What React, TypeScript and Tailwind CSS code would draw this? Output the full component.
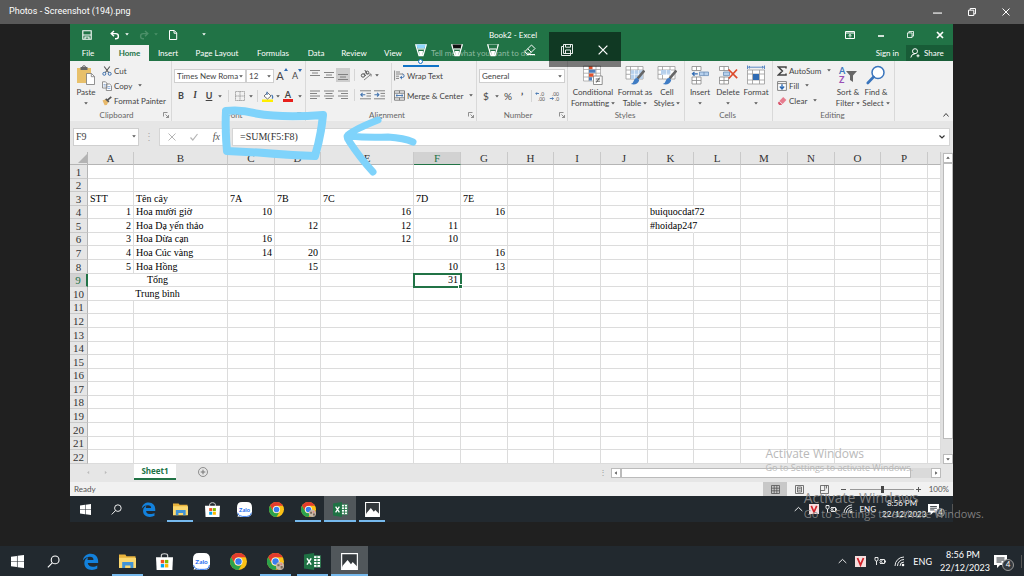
import React from 'react';

type Cell = { text: string; align?: 'left' | 'right' | 'center'; span?: number; spill?: boolean };

const COLUMNS = [
    { name: 'A', width: 'w-[46px]' },
    { name: 'B', width: 'w-[94px]' },
    { name: 'C', width: 'w-[47px]' },
    { name: 'D', width: 'w-[46px]' },
    { name: 'E', width: 'w-[93px]' },
    { name: 'F', width: 'w-[47px]' },
    { name: 'G', width: 'w-[47px]' },
    { name: 'H', width: 'w-[46px]' },
    { name: 'I', width: 'w-[47px]' },
    { name: 'J', width: 'w-[47px]' },
    { name: 'K', width: 'w-[46px]' },
    { name: 'L', width: 'w-[47px]' },
    { name: 'M', width: 'w-[47px]' },
    { name: 'N', width: 'w-[47px]' },
    { name: 'O', width: 'w-[46px]' },
    { name: 'P', width: 'w-[47px]' },
    { name: '', width: '' },
];

const CELLS: Record<string, Cell> = {
    A3: { text: 'STT' },
    B3: { text: 'Tên cây' },
    C3: { text: '7A' },
    D3: { text: '7B' },
    E3: { text: '7C' },
    F3: { text: '7D' },
    G3: { text: '7E' },
    A4: { text: '1', align: 'right' },
    B4: { text: 'Hoa mười giờ' },
    C4: { text: '10', align: 'right' },
    E4: { text: '16', align: 'right' },
    G4: { text: '16', align: 'right' },
    K4: { text: 'buiquocdat72', spill: true },
    A5: { text: '2', align: 'right' },
    B5: { text: 'Hoa Dạ yến thảo' },
    D5: { text: '12', align: 'right' },
    E5: { text: '12', align: 'right' },
    F5: { text: '11', align: 'right' },
    K5: { text: '#hoidap247', spill: true },
    A6: { text: '3', align: 'right' },
    B6: { text: 'Hoa Dừa cạn' },
    C6: { text: '16', align: 'right' },
    E6: { text: '12', align: 'right' },
    F6: { text: '10', align: 'right' },
    A7: { text: '4', align: 'right' },
    B7: { text: 'Hoa Cúc vàng' },
    C7: { text: '14', align: 'right' },
    D7: { text: '20', align: 'right' },
    G7: { text: '16', align: 'right' },
    A8: { text: '5', align: 'right' },
    B8: { text: 'Hoa Hồng' },
    D8: { text: '15', align: 'right' },
    F8: { text: '10', align: 'right' },
    G8: { text: '13', align: 'right' },
    A9: { text: 'Tổng', align: 'center', span: 2 },
    F9: { text: '31', align: 'right' },
    A10: { text: 'Trung bình', align: 'center', span: 2 },
};

const ROWS = Array.from({ length: 22 }, (_, i) => i + 1);

const ALIGN = { left: 'text-left', right: 'text-right', center: 'text-center' };

/* ---------- icons ---------- */

interface IconProps {
    box: string;
    className?: string;
    children: React.ReactNode;
}

const Icon = ({ box, className = 'size-3', children }: IconProps) => (
    <svg viewBox={box} className={`shrink-0 ${className}`} fill="none" stroke="currentColor" aria-hidden="true">{children}</svg>
);

const Caret = ({ className = 'text-[#555]' }: { className?: string }) => (
    <Icon box="0 0 4 3" className={`h-[3px] w-1 ${className}`}><path d="M.2.2h3.600L2 2.400z" fill="currentColor" stroke="none" /></Icon>
);

const Launcher = () => (
    <Icon box="0 0 6 6" className="size-[6px] text-[#777]"><path d="M.5 4.5v-4h4M2.5 2.5l3 3M5.5 3v2.5H3" strokeWidth=".8" /></Icon>
);

const SaveIcon = () => (
    <Icon box="0 0 10 10" className="size-[10px]"><path d="M.8.8h8.4v8.4H.8zM.8 5h8.4M3 9V7h4v2" strokeWidth="1.1" /></Icon>
);

const UndoIcon = ({ flip = false }: { flip?: boolean }) => (
    <Icon box="0 0 10 10" className={flip ? 'size-[10px] -scale-x-100 text-[#4c9069]' : 'size-[10px]'}>
        <path d="M4 1 1.2 3.6 4 6.3M1.4 3.6h4.4a2.6 2.6 0 0 1 0 5.2H5" strokeWidth="1.4" />
    </Icon>
);

const PageIcon = () => (
    <Icon box="0 0 10 10" className="size-[10px]"><path d="M1.5.5h4.8l2.4 2.4v6.6H1.5zM6 .5v2.7h2.7" /></Icon>
);

const RestoreIcon = ({ className = 'size-2' }: { className?: string }) => (
    <Icon box="0 0 8 8" className={className}><path d="M.5 2.2h5.3v5.3H.5zM2.2 2V.5h5.3v5.3H6" /></Icon>
);

const CloseIcon = ({ className = 'size-2' }: { className?: string }) => (
    <Icon box="0 0 8 8" className={className}><path d="m.5.5 7 7m0-7-7 7" /></Icon>
);

const MinusIcon = ({ className = 'size-2' }: { className?: string }) => (
    <Icon box="0 0 8 8" className={className}><path d="M0 4.5h8" /></Icon>
);

const PasteIcon = () => (
    <Icon box="0 0 20 20" className="size-5">
        <path d="M1 3h14v15H1z" fill="#e8c06a" stroke="none" />
        <path d="M4.5 2h7v3h-7z" fill="#666" stroke="none" />
        <path d="M6.5 2.2a1.5 1.5 0 0 1 3 0" stroke="#666" />
        <path d="M10.5 8.5h5l3 3v8h-8z" fill="#fff" stroke="#777" strokeWidth=".8" />
        <path d="M15.3 8.5v3.2h3.2" stroke="#777" strokeWidth=".8" />
    </Icon>
);

const CutIcon = () => (
    <Icon box="0 0 10 10" className="size-[10px]">
        <path d="M2.2.5 6.8 6.8M7.8.5 3.2 6.8" stroke="#555" strokeWidth="1.1" />
        <circle cx="2.3" cy="7.8" r="1.5" stroke="#4274b0" />
        <circle cx="7.7" cy="7.8" r="1.5" stroke="#4274b0" />
    </Icon>
);

const CopyIcon = () => (
    <Icon box="0 0 10 10" className="size-[10px]">
        <path d="M.5.8h3l1.4 1.4V7H.5zM4.3 3h3.4l1.8 1.8v4.7H4.3z" fill="#fff" stroke="#777" strokeWidth=".8" />
        <path d="M1.5 3.4h2M1.5 5h2M5.4 5.6h3M5.4 7.4h3" stroke="#5b8ac6" strokeWidth=".7" />
    </Icon>
);

const PainterIcon = () => (
    <Icon box="0 0 10 10" className="size-[10px]">
        <path d="m.5 4.5 3-1.3 2.8 2.9L4.8 9 2.6 9.3z" fill="#e8b96a" stroke="none" />
        <path d="m3.7 2.9 3.2 3M5.5 4.2l3.8-3.4" stroke="#555" strokeWidth="1.6" />
    </Icon>
);

const BordersIcon = () => (
    <Icon box="0 0 10 10" className="size-[10px] text-[#888]"><path d="M.5.5h9v9h-9zM5 .5v9M.5 5h9" strokeDasharray="1.2 .8" strokeWidth=".9" /></Icon>
);

const FillIcon = () => (
    <Icon box="0 0 12 11" className="h-[11px] w-3">
        <path d="M0 8.5h11V11H0z" fill="#ffee00" stroke="none" />
        <path d="M5.5 1.5 9 5 5.5 8 2 5z" fill="#fff" stroke="#666" strokeWidth=".9" />
        <path d="M5 4V.8M9.5 4c1.5 1 1.5 2.6.6 3.6" stroke="#4274b0" strokeWidth="1.2" />
    </Icon>
);

const GrowFontIcon = ({ shrink = false }: { shrink?: boolean }) => (
    <span className="relative pr-1">
        <span className={shrink ? 'text-[9px]' : 'text-[11px]'}>A</span>
        <Icon box="0 0 4 3" className="absolute top-0 right-0 h-[3px] w-1 text-[#2f6bb3]">
            <path d={shrink ? 'M0 0h4L2 3z' : 'M0 3h4L2 0z'} fill="currentColor" stroke="none" />
        </Icon>
    </span>
);

const ALIGN_LINES = {
    top: 'M0 .5h10M2 3h6M0 5.5h10',
    middle: 'M0 2.5h10M2 5h6M0 7.5h10',
    bottom: 'M0 4.5h10M2 7h6M0 9.5h10',
    left: 'M0 1h10M0 3.5h7M0 6h10M0 8.5h7',
    center: 'M0 1h10M1.5 3.5h7M0 6h10M1.5 8.5h7',
    right: 'M0 1h10M3 3.5h7M0 6h10M3 8.5h7',
};

const AlignIcon = ({ kind }: { kind: keyof typeof ALIGN_LINES }) => (
    <Icon box="0 0 10 10" className="size-[10px] text-[#777]"><path d={ALIGN_LINES[kind]} strokeWidth=".9" /></Icon>
);

const IndentIcon = ({ out = false }: { out?: boolean }) => (
    <Icon box="0 0 12 10" className="h-[10px] w-3">
        <path d="M0 .8h11M6.5 3.4H11M6.5 6H11M0 8.8h11" stroke="#777" strokeWidth=".9" />
        <path d={out ? 'M5.3 4.7H.8M2.6 2.9.8 4.7l1.8 1.8' : 'M.4 4.7h4.5M3.1 2.9l1.8 1.8-1.8 1.8'} stroke="#4274b0" strokeWidth="1.1" />
    </Icon>
);

const OrientationIcon = () => (
    <Icon box="0 0 12 12" className="size-3">
        <circle cx="3" cy="6.5" r="1.7" stroke="#555" />
        <path d="M4 4.2 5.6 7M4.800 1l2.600 4.200" stroke="#555" />
        <circle cx="7.3" cy="3.6" r="1.5" stroke="#555" />
        <path d="m4 11 6.800-5.500M8.600 5h2.500v2.500" stroke="#777" strokeWidth=".9" />
    </Icon>
);

const WrapIcon = () => (
    <Icon box="0 0 11 11" className="size-[11px]">
        <path d="M.6.5v10M2 2h4M2 4h7M2 6.2h3M2 8.4h3" stroke="#777" strokeWidth=".9" />
        <path d="M6.3 7.5h2.2q1.6 0 1.6-1.7T8.5 4M8 5.8 6.3 7.5 8 9.2" stroke="#4274b0" strokeWidth="1" />
    </Icon>
);

const MergeIcon = () => (
    <Icon box="0 0 11 11" className="size-[11px]">
        <path d="M.5.8h10v9.4H.5zM.5 3.2h10M.5 7.8h10M5.5.8v2.4M5.5 7.8v2.4" stroke="#777" strokeWidth=".9" />
        <path d="M2 5.5h7M3.4 4.3 2 5.5l1.4 1.2M7.6 4.3 9 5.5 7.6 6.7" stroke="#4274b0" strokeWidth=".9" />
    </Icon>
);

const DecimalIcon = ({ more = false }: { more?: boolean }) => (
    <Icon box="0 0 12 12" className="size-3">
        <text x={more ? 5 : 3} y="5.5" fontSize="5" fill="#555" stroke="none">{more ? '.0' : '.00'}</text>
        <text x={more ? 3 : 6} y="10.5" fontSize="5" fill="#555" stroke="none">{more ? '.00' : '.0'}</text>
        <path d={more ? 'M4 3.500H.8M2 2.300.8 3.500 2 4.700' : 'M.8 8.500h3.600M3.200 7.300l1.200 1.200-1.200 1.200'} stroke="#4274b0" strokeWidth=".9" />
    </Icon>
);

const ConditionalIcon = () => (
    <Icon box="0 0 20 20" className="size-5">
        <path d="M.5 1h17v15H.5zM.5 4.5h17M.5 8.2h17M.5 12h17M5.8 1v15M13 1v15" fill="#fff" stroke="#999" strokeWidth=".7" />
        <path d="M6 1.2h3.5v3H6zM6 8.5h4.5v3.2H6z" fill="#e0532f" stroke="none" />
        <path d="M6 4.8h6.5v3H6zM6 12.3h3v3.2H6z" fill="#4b7dbd" stroke="none" />
        <path d="M10.5 11h8.7v8.5h-8.7z" fill="#fff" stroke="#777" strokeWidth=".8" />
        <path d="M12.7 14h4.4M12.7 16.2h4.4M16.6 12.6l-3.3 5" stroke="#444" strokeWidth=".8" />
    </Icon>
);

const TableFormatIcon = ({ cell = false }: { cell?: boolean }) => (
    <Icon box="0 0 20 20" className="size-5">
        <path d="M1 1.5h17v12.5H1zM1 5h17M1 9.3h17M5.5 1.5V14M13 1.5V14" fill="#fff" stroke="#999" strokeWidth=".8" />
        <path d={cell ? 'M4 5h10v5H4z' : 'M5.8 5.3h12v8.5h-12z'} fill="#b6d0ec" stroke="none" />
        <path d="M5.5 9.3h12M9.5 5v8.7M13.5 5v8.7" stroke="#fff" strokeWidth=".6" />
        <path d="m19.3 5.5-6.8 8.2" stroke="#666" strokeWidth="2.6" />
        <path d="M12.8 13q-3.3-.6-4 2.7-.7 2.6-3 3.3 6.3 1.6 8.4-3.6z" fill="#3f7cc4" stroke="none" />
    </Icon>
);

const InsertCellsIcon = () => (
    <Icon box="0 0 20 20" className="size-5">
        <path d="M2 1.5h9v4H2zM6.5 1.5v4M2 12h9v7H2zM6.5 12v7M2 15.5h9" fill="#fff" stroke="#888" strokeWidth=".8" />
        <path d="M9.5 7h9v3.6h-9zM14 7v3.6" fill="#b6d0ec" stroke="#6a8eb8" strokeWidth=".8" />
        <path d="M7.8 8.8H2.5M4.5 6.9 2.5 8.8l2 1.9" stroke="#2f6bb3" strokeWidth="1.3" />
    </Icon>
);

const DeleteCellsIcon = () => (
    <Icon box="0 0 20 20" className="size-5">
        <path d="M1.5 1.5h9v4h-9zM6 1.5v4M1.5 12h9v7h-9zM6 12v7M1.5 15.5h9" fill="#fff" stroke="#888" strokeWidth=".8" />
        <path d="M5.5 7h6v3.6h-6z" fill="#b6d0ec" stroke="#6a8eb8" strokeWidth=".8" />
        <path d="m10.5 4.5 8.7 8.6M19 4.5l-8.2 9" stroke="#dd4b2c" strokeWidth="1.7" />
    </Icon>
);

const FormatCellsIcon = () => (
    <Icon box="0 0 20 20" className="size-5">
        <path d="M1.5 5h17v14h-17zM1.5 9h17M1.5 15h17M6.5 5v14M13.5 5v14" fill="#fff" stroke="#999" strokeWidth=".8" />
        <path d="M7 9h6v6H7z" fill="#2f6bb3" stroke="none" />
        <path d="M1.5.5v3.6M18.5.5v3.6M2.5 2.2h15M4 1 2.6 2.2 4 3.4M16 1l1.4 1.2L16 3.4" stroke="#4b7dbd" strokeWidth=".9" />
    </Icon>
);

const SigmaIcon = () => (
    <Icon box="0 0 10 10" className="size-[10px] text-[#444]"><path d="M9 2.4V1H1.4l4 4-4 4H9V7.4" strokeWidth="1.5" /></Icon>
);

const FillDownIcon = () => (
    <Icon box="0 0 10 10" className="size-[10px]">
        <path d="M.6.6h8.8v8.8H.6zM.6 2.6h8.8" fill="#fff" stroke="#777" strokeWidth=".9" />
        <path d="M5 3.2v4.6M2.8 5.6 5 7.9l2.2-2.3" stroke="#2f6bb3" strokeWidth="1.4" />
    </Icon>
);

const EraserIcon = () => (
    <Icon box="0 0 10 10" className="size-[10px]">
        <path d="M6.2 1 9.4 4 5.6 8 2.4 5z" fill="#e77c8e" stroke="none" />
        <path d="M2 5.5 5 8.5 4.4 9H2.2L.8 7z" fill="#d8526a" stroke="none" />
    </Icon>
);

const SortIcon = () => (
    <Icon box="0 0 20 20" className="size-5">
        <text x="1" y="9" fontSize="9" fontWeight="700" fill="#3c78bd" stroke="none">A</text>
        <text x="1" y="18" fontSize="9" fontWeight="700" fill="#9a4fb5" stroke="none">Z</text>
        <path d="M8 6h11l-4 4.500V17l-3-2v-4.500z" fill="#666" stroke="none" />
    </Icon>
);

const FindIcon = () => (
    <Icon box="0 0 20 20" className="size-5 text-[#3a75bd]">
        <circle cx="12" cy="7.5" r="6" fill="#fff" strokeWidth="1.5" />
        <path d="m7.5 12-5.7 6" strokeWidth="2.6" strokeLinecap="round" />
    </Icon>
);

/* ---------- ribbon ---------- */

const Divider = () => <span className="block h-3 w-px bg-[#d5d5d5]" />;

interface GroupProps {
    title: string;
    width: string;
    launcher?: boolean;
    children: React.ReactNode;
}

const Group = ({ title, width, launcher = false, children }: GroupProps) => (
    <section className={`flex shrink-0 flex-col border-r border-[#d9d9d9] pt-[2px] ${width}`}>
        <div className="flex flex-1 items-start">{children}</div>
        <div className="flex h-3 items-center pr-[2px] text-[#666]">
            <h2 className="flex-1 text-center leading-3">{title}</h2>
            {launcher && <button aria-label={`${title} settings`}><Launcher /></button>}
        </div>
    </section>
);

interface BigButtonProps {
    icon: React.ReactNode;
    lines: [string, string?];
    width: string;
}

const BigButton = ({ icon, lines, width }: BigButtonProps) => (
    <button className={`flex shrink-0 flex-col items-center pt-[2px] leading-[11px] whitespace-nowrap ${width}`}>
        {icon}
        <span className="mt-[2px]">{lines[0]}</span>
        <span className="flex h-[11px] items-center gap-[2px]">{lines[1]}<Caret /></span>
    </button>
);

interface SmallButtonProps {
    icon: React.ReactNode;
    label: string;
    caret?: boolean;
}

const SmallButton = ({ icon, label, caret = false }: SmallButtonProps) => (
    <button className="flex h-[15px] items-center gap-[2px] whitespace-nowrap">
        {icon}
        <span>{label}</span>
        {caret && <span className="flex h-full items-center pl-1"><Caret /></span>}
    </button>
);

const Tool = ({ label, width = 'w-[14px]', children }: { label: string; width?: string; children: React.ReactNode }) => (
    <button aria-label={label} className={`flex h-[14px] items-center justify-center ${width}`}>{children}</button>
);

const Combo = ({ label, value, width, className = 'h-[14px]' }: { label: string; value: string; width: string; className?: string }) => (
    <div className={`relative shrink-0 ${width}`}>
        <select aria-label={label} className={`block w-full appearance-none border border-[#cfcfcf] bg-white pl-[2px] text-[#444] ${className}`}>
            <option>{value}</option>
        </select>
        <span className="pointer-events-none absolute inset-y-0 right-[3px] flex items-center"><Caret /></span>
    </div>
);

const Ribbon = () => (
    <div className="flex h-[60px] overflow-hidden bg-[#f1f1f1] text-[8px] text-[#444]">
        <Group title="Clipboard" width="w-[102px]" launcher>
            <BigButton icon={<PasteIcon />} lines={['Paste']} width="w-8" />
            <div>
                <SmallButton icon={<CutIcon />} label="Cut" />
                <SmallButton icon={<CopyIcon />} label="Copy" caret />
                <SmallButton icon={<PainterIcon />} label="Format Painter" />
            </div>
        </Group>
        <Group title="Font" width="w-[134px]" launcher>
            <div className="flex flex-col gap-[6px] pt-[6px] pl-[2px]">
                <div className="flex items-center">
                    <Combo label="Font name" value="Times New Roma" width="w-[72px]" />
                    <Combo label="Font size" value="12" width="w-7" />
                    <Tool label="Increase font size" width="w-4"><GrowFontIcon /></Tool>
                    <Tool label="Decrease font size"><GrowFontIcon shrink /></Tool>
                </div>
                <div className="flex items-center text-[9px]">
                    <Tool label="Bold"><b>B</b></Tool>
                    <Tool label="Italic"><i className="font-serif font-bold">I</i></Tool>
                    <Tool label="Underline"><span className="font-bold underline">U</span></Tool>
                    <Tool label="Underline style" width="w-2"><Caret /></Tool>
                    <span className="px-1"><Divider /></span>
                    <Tool label="Borders"><BordersIcon /></Tool>
                    <Tool label="Border style" width="w-2"><Caret /></Tool>
                    <span className="px-[2px]"><Divider /></span>
                    <Tool label="Fill color" width="w-4"><FillIcon /></Tool>
                    <Tool label="Fill color list" width="w-1"><Caret /></Tool>
                    <Tool label="Font color" width="w-4"><span className="border-b-[3px] border-[#e8201c] px-[2px] text-[9px] leading-[8px] font-bold">A</span></Tool>
                    <Tool label="Font color list" width="w-2"><Caret /></Tool>
                </div>
            </div>
        </Group>
        <Group title="Alignment" width="w-[171px]" launcher>
            <div className="flex flex-col gap-[6px] pt-[5px] pl-[2px]">
                <div className="flex items-center">
                    <Tool label="Top align"><AlignIcon kind="top" /></Tool>
                    <Tool label="Middle align"><AlignIcon kind="middle" /></Tool>
                    <span className="bg-[#cdcdcd]"><Tool label="Bottom align"><AlignIcon kind="bottom" /></Tool></span>
                    <span className="px-1"><Divider /></span>
                    <Tool label="Orientation"><OrientationIcon /></Tool>
                    <Tool label="Orientation list" width="w-2"><Caret /></Tool>
                </div>
                <div className="flex items-center">
                    <Tool label="Align left"><AlignIcon kind="left" /></Tool>
                    <Tool label="Center"><AlignIcon kind="center" /></Tool>
                    <Tool label="Align right"><AlignIcon kind="right" /></Tool>
                    <span className="px-1"><Divider /></span>
                    <Tool label="Decrease indent"><IndentIcon out /></Tool>
                    <Tool label="Increase indent"><IndentIcon /></Tool>
                </div>
            </div>
            <div className="ml-1 flex flex-col gap-[5px] border-l border-[#d9d9d9] pt-[5px] pl-[2px]">
                <SmallButton icon={<WrapIcon />} label="Wrap Text" />
                <SmallButton icon={<MergeIcon />} label="Merge & Center" caret />
            </div>
        </Group>
        <Group title="Number" width="w-[91px]" launcher>
            <div className="flex flex-1 flex-col gap-[6px] px-[2px] pt-[6px]">
                <Combo label="Number format" value="General" width="w-full" />
                <div className="flex items-center text-[10px]">
                    <Tool label="Currency">$</Tool>
                    <Tool label="Currency list" width="w-2"><Caret /></Tool>
                    <Tool label="Percent">%</Tool>
                    <Tool label="Comma"><b>’</b></Tool>
                    <span className="px-[2px]"><Divider /></span>
                    <Tool label="Increase decimal"><DecimalIcon more /></Tool>
                    <Tool label="Decrease decimal"><DecimalIcon /></Tool>
                </div>
            </div>
        </Group>
        <Group title="Styles" width="w-[117px]">
            <BigButton icon={<ConditionalIcon />} lines={['Conditional', 'Formatting']} width="w-[50px]" />
            <BigButton icon={<TableFormatIcon />} lines={['Format as', 'Table']} width="w-[34px]" />
            <BigButton icon={<TableFormatIcon cell />} lines={['Cell', 'Styles']} width="w-[30px]" />
        </Group>
        <Group title="Cells" width="w-[88px]">
            <BigButton icon={<InsertCellsIcon />} lines={['Insert']} width="w-[30px]" />
            <BigButton icon={<DeleteCellsIcon />} lines={['Delete']} width="w-[26px]" />
            <BigButton icon={<FormatCellsIcon />} lines={['Format']} width="w-[30px]" />
        </Group>
        <Group title="Editing" width="w-[122px]">
            <div className="w-[60px] pl-1">
                <SmallButton icon={<SigmaIcon />} label="AutoSum" caret />
                <SmallButton icon={<FillDownIcon />} label="Fill" caret />
                <SmallButton icon={<EraserIcon />} label="Clear" caret />
            </div>
            <BigButton icon={<SortIcon />} lines={['Sort &', 'Filter']} width="w-[30px]" />
            <BigButton icon={<FindIcon />} lines={['Find &', 'Select']} width="w-[26px]" />
        </Group>
        <div className="flex flex-1 items-end justify-end p-1">
            <button aria-label="Collapse ribbon"><Icon box="0 0 6 4" className="h-1 w-[6px]"><path d="m.5 3.5 2.5-3 2.5 3" /></Icon></button>
        </div>
    </div>
);

/* ---------- workbook ---------- */

const TABS = [
    { name: 'File', width: 'w-10 pr-1' },
    { name: 'Home', width: 'w-[39px]' },
    { name: 'Insert', width: 'w-[38px]' },
    { name: 'Page Layout', width: 'w-[60px]' },
    { name: 'Formulas', width: 'w-[52px]' },
    { name: 'Data', width: 'w-[34px]' },
    { name: 'Review', width: 'w-[42px]' },
    { name: 'View', width: 'w-9' },
];

const Header = () => (
    <header className="bg-[#217346] text-white">
        <div className="flex h-[21px] items-center">
            <div className="flex flex-1 items-center pl-3">
                <button aria-label="Save"><SaveIcon /></button>
                <button aria-label="Undo" className="ml-[18px] flex items-center gap-[5px]"><UndoIcon /><Caret className="text-white" /></button>
                <button aria-label="Redo" className="ml-[10px] flex items-center gap-[5px]"><UndoIcon flip /><Caret className="text-[#4c9069]" /></button>
                <button aria-label="New" className="ml-[10px]"><PageIcon /></button>
                <button aria-label="Customize toolbar" className="ml-6"><Caret className="text-white" /></button>
            </div>
            <h1 className="text-[8px]">Book2 - Excel</h1>
            <div className="flex flex-1 items-center justify-end gap-[22px] pr-[9px]">
                <button aria-label="Ribbon options"><Icon box="0 0 10 8" className="h-2 w-[10px]"><path d="M.5.5h9v7h-9zM.5 2h9M5 6.5V3.5M3.5 4.8 5 3.5l1.5 1.3" /></Icon></button>
                <button aria-label="Minimize workbook"><Icon box="0 0 8 8" className="size-2"><path d="M1 5h6" strokeWidth="1.6" /></Icon></button>
                <button aria-label="Restore workbook"><RestoreIcon className="size-[7px]" /></button>
                <button aria-label="Close workbook"><Icon box="0 0 8 8" className="size-2"><path d="m1 1 6 6m0-6-6 6" strokeWidth="1.7" /></Icon></button>
            </div>
        </div>
        <nav className="flex h-4 items-center text-[8px]">
            {TABS.map(tab => (
                <button
                    key={tab.name}
                    className={`h-full ${tab.width} ${tab.name === 'Home' ? 'bg-[#f1f1f1] font-bold text-[#217346]' : ''}`}
                >
                    {tab.name}
                </button>
            ))}
            <span className="flex-1 pl-5 text-[#8fbaa1]">Tell me what you want to do...</span>
            <a href="#signin" className="pr-[7px]">Sign in</a>
            <button className="flex h-full w-[47px] items-center gap-1 bg-[#185c37] pl-1">
                <Icon box="0 0 10 10" className="size-[10px]"><circle cx="5" cy="3.2" r="2.5" /><path d="M.8 9.5Q1.3 6 5 5.7M6.5 7.8h3M8 6.3v3" /></Icon>
                Share
            </button>
        </nav>
    </header>
);

const FormulaBar = () => (
    <div className="flex h-[31px] items-center bg-[#e6e6e6] px-[3px] font-['Liberation_Serif',serif] text-[10px] text-[#333]">
        <Combo label="Name box" value="F9" width="w-[66px]" className="h-[18px]" />
        <span className="w-5 text-center text-[#aaa]">⋮</span>
        <div className="flex h-[18px] w-[70px] items-center justify-between border border-[#d5d5d5] bg-white px-2 text-[#b5b5b5]">
            <button aria-label="Cancel"><CloseIcon /></button>
            <button aria-label="Enter"><Icon box="0 0 8 8" className="size-2"><path d="m.5 4.5 2.3 2.5 4.7-6" strokeWidth="1.2" /></Icon></button>
            <button aria-label="Insert function" className="text-[#555] italic">fx</button>
        </div>
        <div className="ml-[3px] flex h-[18px] flex-1 items-center border border-[#d5d5d5] bg-white pr-1">
            <input aria-label="Formula" defaultValue="=SUM(F5:F8)" className="h-full min-w-0 flex-1 pl-[7px]" />
            <Icon box="0 0 6 4" className="h-1 w-[6px]"><path d="m.5.5 2.5 2.5L5.5.5" strokeWidth="1.2" /></Icon>
        </div>
    </div>
);

const Row = ({ row }: { row: number }) => {
    const cells: React.ReactNode[] = [];
    for (let i = 0; i < COLUMNS.length; i++) {
        const id = COLUMNS[i].name + row;
        const cell = CELLS[id];
        const selected = id === 'F9';
        cells.push(
            <td
                key={i}
                colSpan={cell?.span}
                className={`border-r border-b border-b-[#dcdcdc] px-[2px] py-0 align-bottom whitespace-nowrap ${cell?.spill ? 'border-r-transparent' : 'border-r-[#dcdcdc]'} ${ALIGN[cell?.align ?? 'left']} ${selected ? 'relative outline-2 -outline-offset-1 outline-[#217346]' : ''}`}
            >
                {cell?.text}
                {selected && <span className="absolute -right-[2px] -bottom-[2px] size-[3px] bg-[#217346] ring-1 ring-white" />}
            </td>
        );
        if (cell?.span) i += cell.span - 1;
    }
    return (
        <tr>
            <th className={`border-b border-b-[#c9c9c9] p-0 align-bottom text-[11px] font-normal ${row === 9 ? 'border-r-2 border-r-[#217346] bg-[#d2d2d2] text-[#217346]' : 'border-r border-r-[#b5b5b5] bg-[#e6e6e6] text-[#333]'}`}>{row}</th>
            {cells}
        </tr>
    );
};

const Sheet = () => (
    <div className="flex bg-[#e6e6e6]">
        <div className="min-w-0 flex-1">
            <table className="h-[312px] w-full table-fixed border-separate border-spacing-0 bg-white font-['Liberation_Serif',serif] text-[10px] leading-3 text-black">
                <colgroup>
                    <col className="w-[18px]" />
                    {COLUMNS.map((column, i) => <col key={i} className={column.width} />)}
                </colgroup>
                <thead>
                    <tr className="h-[13px]">
                        <th className="border-r border-b border-[#b5b5b5] bg-[#e6e6e6] p-0">
                            <Icon box="0 0 8 8" className="ml-auto size-[9px]"><path d="M8 0v8H0z" fill="#b3b3b3" stroke="none" /></Icon>
                        </th>
                        {COLUMNS.map((column, i) => (
                            <th
                                key={i}
                                className={`border-r border-b border-r-[#c9c9c9] p-0 text-[11px] font-normal ${column.name === 'F' ? 'border-b-[#217346] bg-[#d2d2d2] text-[#217346]' : 'border-b-[#b5b5b5] bg-[#e6e6e6] text-[#333]'}`}
                            >
                                {column.name}
                            </th>
                        ))}
                    </tr>
                </thead>
                <tbody>{ROWS.map(row => <Row key={row} row={row} />)}</tbody>
            </table>
        </div>
        <div className="flex w-3 flex-col items-end bg-[#e1e1e1] pt-px text-[#666]">
            <button aria-label="Scroll up" className="flex h-[10px] w-[10px] rotate-180 items-center justify-center border border-[#bbb] bg-white"><Caret /></button>
            <span className="w-[10px] flex-1 border border-[#bbb] bg-white" />
            <span className="h-[15px]" />
            <button aria-label="Scroll down" className="flex h-[10px] w-[10px] items-center justify-center border border-[#bbb] bg-white"><Caret /></button>
        </div>
    </div>
);

const SheetTabs = () => (
    <div className="flex h-[18px] items-start bg-[#e6e6e6]">
        <div className="flex h-4 w-16 items-center gap-[14px] pl-4">
            <Caret className="rotate-90 text-[#bbb]" />
            <Caret className="-rotate-90 text-[#bbb]" />
        </div>
        <button className="h-4 w-[42px] border-b-2 border-[#217346] bg-white font-['Open_Sans',sans-serif] text-[8px] font-bold text-[#217346]">Sheet1</button>
        <button aria-label="New sheet" className="ml-[22px] flex h-4 items-center">
            <Icon box="0 0 10 10" className="size-[10px] text-[#777]"><circle cx="5" cy="5" r="4.5" strokeWidth=".8" /><path d="M5 2.7v4.6M2.7 5h4.6" /></Icon>
        </button>
        <span className="ml-auto flex h-4 w-3 items-center text-[8px] text-[#999]">⋮</span>
        <div className="mt-1 mr-3 flex h-[10px] w-[330px]">
            <button aria-label="Scroll left" className="flex w-[10px] rotate-90 items-center justify-center border border-[#bbb] bg-white"><Caret /></button>
            <span className="flex-1 border border-[#bbb] bg-white" />
            <span className="w-5 bg-[#dadada]" />
            <button aria-label="Scroll right" className="flex w-[10px] -rotate-90 items-center justify-center border border-[#bbb] bg-white"><Caret /></button>
        </div>
    </div>
);

const StatusBar = () => (
    <div className="flex h-[14px] items-center bg-[#f1f1f1] pr-1 pl-1 text-[8px] text-[#555]">
        <span className="flex-1">Ready</span>
        <button aria-label="Normal view" className="flex h-full w-6 items-center justify-center bg-[#c8c8c8]">
            <Icon box="0 0 9 9" className="size-[9px]"><path d="M.5.5h8v8h-8zM.5 3.2h8M.5 5.8h8M3.2.5v8M5.8.5v8" strokeWidth=".8" /></Icon>
        </button>
        <button aria-label="Page layout view" className="flex w-[25px] justify-center">
            <Icon box="0 0 9 9" className="size-[9px]"><path d="M.5.5h8v8h-8zM2.5 2h4v5h-4zM3.3 3.6h2.4M3.3 5.2h2.4" strokeWidth=".8" /></Icon>
        </button>
        <button aria-label="Page break view" className="flex w-[25px] justify-center">
            <Icon box="0 0 9 9" className="size-[9px]"><path d="M.5.5h8v8h-8zM.5 5.5h4.2V.5M6.5.5v3" strokeWidth=".8" /></Icon>
        </button>
        <button aria-label="Zoom out"><Icon box="0 0 5 5" className="mx-1 size-[5px]"><path d="M0 2.5h5" /></Icon></button>
        <input
            type="range"
            aria-label="Zoom"
            defaultValue={50}
            className="h-px w-16 appearance-none bg-[#999] [&::-webkit-slider-thumb]:h-[7px] [&::-webkit-slider-thumb]:w-[3px] [&::-webkit-slider-thumb]:appearance-none [&::-webkit-slider-thumb]:bg-[#444]"
        />
        <button aria-label="Zoom in"><Icon box="0 0 5 5" className="ml-[2px] size-[5px]"><path d="M0 2.5h5M2.5 0v5" /></Icon></button>
        <span className="w-7 text-right">100%</span>
    </div>
);

/* ---------- taskbar ---------- */

const WindowsLogo = ({ size }: { size: string }) => (
    <Icon box="0 0 12 12" className={size}><path d="M0 1.7 5.5.9v4.8H0zM6.1.8 12 0v5.7H6.1zM0 6.3h5.5v4.8L0 10.3zM6.1 6.3H12V12l-5.9-.8z" fill="#fff" stroke="none" /></Icon>
);

const SearchIcon = ({ size }: { size: string }) => (
    <Icon box="0 0 12 12" className={size}><circle cx="7.5" cy="4.5" r="3.6" stroke="#fff" /><path d="M4.9 7.2.8 11.4" stroke="#fff" /></Icon>
);

const EdgeIcon = ({ size }: { size: string }) => (
    <Icon box="0 0 16 16" className={size}>
        <path d="M.8 7C1.5 2.7 4.5.6 8.2.6c4.4 0 7 3.2 7 7.2v1.7H5.4c.2 2.3 2.2 3.4 4.7 3.4 1.7 0 3.1-.5 4.3-1.2v3c-1.4.8-3.1 1.2-5 1.2-4.2 0-7.2-2.4-7.2-6.3 0-2.4 1.3-4.5 3.6-5.5-.4.7-.6 1.5-.6 2.4h5.6C10.8 4.5 9.6 3.5 7.5 3.5 4.7 3.5 2.2 4.8.8 7z" fill="#1381dc" stroke="none" />
    </Icon>
);

const FolderIcon = ({ size }: { size: string }) => (
    <Icon box="0 0 16 16" className={size}>
        <path d="M0 1.5h6l1 1.5h8.5V14H0z" fill="#e9b33c" stroke="none" />
        <path d="M0 4.5h16V14H0z" fill="#fbd870" stroke="none" />
        <path d="M3 8.5h10.5V14h-2.7v-2.3h-5V14H3z" fill="#4193d6" stroke="none" />
    </Icon>
);

const StoreIcon = ({ size }: { size: string }) => (
    <Icon box="0 0 16 16" className={size}>
        <path d="M5 4.5V2.3C5 .2 11 .2 11 2.3v2.2" stroke="#ddd" />
        <path d="M0 4h16l-.6 12H.6z" fill="#fff" stroke="none" />
        <path d="M4.5 6.5h3.2v3.2H4.5z" fill="#f25022" stroke="none" />
        <path d="M8.4 6.5h3.2v3.2H8.4z" fill="#7fba00" stroke="none" />
        <path d="M4.5 10.4h3.2v3.2H4.5z" fill="#00a4ef" stroke="none" />
        <path d="M8.4 10.4h3.2v3.2H8.4z" fill="#ffb900" stroke="none" />
    </Icon>
);

const ZaloIcon = ({ size }: { size: string }) => (
    <Icon box="0 0 16 16" className={size}>
        <path d="M5.5 0h5Q16 0 16 5.5v5q0 5.5-5.5 5.5h-5q-2 0-3-.6l-2 .4.6-2Q0 12.5 0 10.5v-5Q0 0 5.5 0z" fill="#fff" stroke="none" />
        <path d="M.6 11.5Q1.5 15.4 6 15.4h4.5q4.5 0 4.9-4" stroke="#1a6bf0" strokeWidth=".9" />
        <text x="8" y="10.2" fontSize="6" fontWeight="700" textAnchor="middle" fill="#1a6bf0" stroke="none">Zalo</text>
    </Icon>
);

const ChromeIcon = ({ size, badge = false }: { size: string; badge?: boolean }) => (
    <Icon box="0 0 16 16" className={size}>
        <circle cx="8" cy="8" r="8" fill="#fbc116" stroke="none" />
        <path d="M1.07 4A8 8 0 0 1 14.93 4H8a4 4 0 0 0-3.46 6z" fill="#e33b2e" stroke="none" />
        <path d="M1.07 4A8 8 0 0 0 8 16l3.46-6A4 4 0 0 1 4.54 10z" fill="#2ba24c" stroke="none" />
        <circle cx="8" cy="8" r="3.8" fill="#fff" stroke="none" />
        <circle cx="8" cy="8" r="3" fill="#3b7ded" stroke="none" />
        {badge && <circle cx="12.2" cy="12.2" r="3.8" fill="#c9b9a8" stroke="none" />}
        {badge && <path d="M9.8 10.5h2v2h-2zM12.8 12.3h2v2.2h-2z" fill="#78685c" stroke="none" />}
        {badge && <path d="M12.6 9.8h1.6v1.6h-1.6z" fill="#e8807a" stroke="none" />}
    </Icon>
);

const ExcelIcon = ({ size }: { size: string }) => (
    <Icon box="0 0 16 16" className={size}>
        <path d="M8.5 2.5h7v11h-7z" fill="#fff" stroke="#1f7244" strokeWidth=".8" />
        <path d="M9 5.2h6M9 8h6M9 10.8h6M12.2 3v10" stroke="#1f7244" strokeWidth=".9" />
        <path d="M0 1.5 9.5 0v16L0 14.5z" fill="#1f7244" stroke="none" />
        <path d="m2.8 5 4 6m0-6-4 6" stroke="#fff" strokeWidth="1.4" />
    </Icon>
);

const PhotosIcon = ({ size }: { size: string }) => (
    <Icon box="0 0 16 16" className={size}>
        <path d="M.6.6h14.8v14.8H.6z" fill="#33383c" stroke="#fff" strokeWidth="1.1" />
        <path d="M1 13.5 1.5 12 6.2 6.5l3.2 4L11 8.5l4 4V15H1z" fill="#fff" stroke="none" />
    </Icon>
);

const APPS = [
    { name: 'Start', icon: (s: string) => <WindowsLogo size={s} /> },
    { name: 'Search', icon: (s: string) => <SearchIcon size={s} /> },
    { name: 'Edge', icon: (s: string) => <EdgeIcon size={s} /> },
    { name: 'File Explorer', icon: (s: string) => <FolderIcon size={s} />, open: true },
    { name: 'Store', icon: (s: string) => <StoreIcon size={s} /> },
    { name: 'Zalo', icon: (s: string) => <ZaloIcon size={s} /> },
    { name: 'Chrome', icon: (s: string) => <ChromeIcon size={s} /> },
    { name: 'Chrome profile', icon: (s: string) => <ChromeIcon size={s} badge />, open: true },
    { name: 'Excel', icon: (s: string) => <ExcelIcon size={s} />, open: true },
    { name: 'Photos', icon: (s: string) => <PhotosIcon size={s} />, open: true },
];

const Taskbar = ({ active, small = false }: { active: string; small?: boolean }) => {
    const glyph = small ? 'size-[11px]' : 'size-[13px]';
    return (
        <footer className={`flex items-stretch bg-[#22292f] text-white ${small ? 'h-[26px] text-[8px] leading-[11px]' : 'h-[30px] text-[9px] leading-[13px]'}`}>
            {APPS.map((app, i) => {
                const size = i < 2 ? glyph : small ? 'size-[15px]' : 'size-[17px]';
                const width = small ? (i === 0 ? 'w-[30px]' : 'w-8') : (i === 0 ? 'w-[35px]' : 'w-[37px]');
                return (
                    <button key={app.name} aria-label={app.name} className={`relative flex items-center justify-center ${width} ${app.name === active ? 'bg-[#51575b]' : ''}`}>
                        {app.icon(size)}
                        {app.open && <span className={`absolute bottom-0 h-[2px] bg-[#76b9ed] ${app.name === active ? 'inset-x-0' : 'inset-x-[3px]'}`} />}
                    </button>
                );
            })}
            <div className={`ml-auto flex items-center ${small ? 'gap-[6px]' : 'gap-2'}`}>
                <button aria-label="Hidden icons"><Icon box="0 0 10 6" className="h-[6px] w-[9px]"><path d="m.8 5.2 4.2-4 4.2 4" /></Icon></button>
                <Icon box="0 0 11 11" className={small ? 'size-[10px]' : 'size-[11px]'}><path d="M0 0h11v11H0z" fill="#f6dede" stroke="none" /><path d="m2.5 2 3 7 3-7" stroke="#d3222a" strokeWidth="1.8" /></Icon>
                <Icon box="0 0 12 9" className="h-[9px] w-3"><path d="M1 .5h3v2.3q0 1.2-1.5 1.2T1 2.8zM2.5 4v4M6 6.5h4.500v-4H6M5.500 3l3 3M8.500 3l-3 3M11.500 3.500v2" strokeWidth=".9" /></Icon>
                <Icon box="0 0 11 11" className={small ? 'size-[10px]' : 'size-[11px]'}><path d="M1 10A9 9 0 0 1 10 1M3.5 10A6.5 6.5 0 0 1 10 3.5M6 10a4 4 0 0 1 4-4" strokeWidth=".9" /><circle cx="9" cy="9" r="1.3" fill="currentColor" stroke="none" /></Icon>
                <span>ENG</span>
                <span className={`text-center ${small ? 'w-10' : 'w-[46px]'}`}>8:56 PM<br />22/12/2023</span>
                <button aria-label="Notifications" className={`relative flex items-center border-r border-[#555] ${small ? 'w-[25px]' : 'mr-[2px] w-7'}`}>
                    <Icon box="0 0 13 13" className={small ? 'size-[11px]' : 'size-[13px]'}><path d="M0 0h13v10H6l-3 3v-3H0z" fill="#fff" stroke="none" /><path d="M2.5 3h8M2.5 5h8M2.5 7h5" stroke="#22292f" /></Icon>
                    <span className={`absolute top-1 flex items-center justify-center rounded-full border border-[#999] bg-[#33393e] ${small ? 'left-2 size-[9px] text-[7px]' : 'left-2 size-3 text-[8px]'}`}>4</span>
                </button>
            </div>
        </footer>
    );
};

/* ---------- photo viewer ---------- */

const PEN_COLORS = [
    { name: 'Ballpoint pen', tip: '#8fd8ff' },
    { name: 'Pencil', tip: '#111111' },
    { name: 'Calligraphy pen', tip: '#217346' },
];

const DrawToolbar = () => (
    <div className="absolute top-2 left-1/2 -ml-[109px] flex text-white">
        {PEN_COLORS.map((pen, i) => (
            <button key={pen.name} aria-label={pen.name} className={`relative flex h-[35px] w-9 justify-center pt-3 ${i === 0 ? 'border-b-2 border-[#1173c7]' : ''}`}>
                <Icon box="0 0 12 13" className="h-[13px] w-3">
                    <path d="M.8 1h10.4L8 11.5H4z" fill="#217346" strokeWidth="1.3" />
                    <path d="M1.500.5h9L9.500 4.500h-7z" fill={pen.tip} stroke="none" />
                    <path d="M2.7 5h6.6" strokeWidth="1.1" />
                    <path d="M4 7h4L7.5 12h-3z" fill="#fff" stroke="none" />
                </Icon>
                {i === 0 && <span className="absolute bottom-px size-[5px] rounded-full border border-[#1173c7] bg-white" />}
            </button>
        ))}
        <button aria-label="Eraser" className="flex h-[35px] w-[38px] justify-center pt-3">
            <Icon box="0 0 12 12" className="size-3"><path d="M7.5 1 11 4.5 5.5 10H3L.8 7.7zM3.8 4.7l3.5 3.6M3 10.5h8" /></Icon>
        </button>
        <div className="flex bg-black/50">
            <button aria-label="Save a copy" className="flex h-[35px] w-9 items-center justify-center">
                <Icon box="0 0 12 12" className="size-3"><path d="M2.5.5h9v9h-9zM4.5.5v2.7h5V.5M4.5 9.5V6h5v3.5M2.5 2.5h-2v9h9v-2" strokeWidth=".9" /></Icon>
            </button>
            <button aria-label="Stop drawing" className="flex h-[35px] w-9 items-center justify-center"><CloseIcon className="size-[10px]" /></button>
        </div>
    </div>
);

const Ink = () => (
    <svg viewBox="0 0 200 76" className="pointer-events-none absolute top-[82px] left-[148px] h-[76px] w-[200px]" fill="none" stroke="#7fd3fb" strokeLinecap="round" strokeLinejoin="round" aria-hidden="true">
        <path d="M8 5Q7 24 9 45Q24 46 40 46.5Q70 49 97 50Q103 30 105 9Q64 12 38 7.5Q22 3 8 5" strokeWidth="8" />
        <path d="M160 14Q137 23 130 29Q128 31 131 35Q142 52 155 66M131 30Q150 32 170 31Q186 32 195 36" strokeWidth="7" />
    </svg>
);

const App = () => (
    <div className="flex min-h-screen flex-col bg-[#202020] font-[Lato,'Noto_Sans',sans-serif]">
        <div className="flex h-6 items-center bg-[#595959] pr-[14px] pl-[9px] text-white">
            <span className="flex-1 font-[Roboto,sans-serif] text-[9px]">Photos - Screenshot (194).png</span>
            <div className="flex items-center gap-[26px]">
                <button aria-label="Minimize"><MinusIcon className="size-[9px]" /></button>
                <button aria-label="Restore"><RestoreIcon /></button>
                <button aria-label="Close"><CloseIcon /></button>
            </div>
        </div>
        <main className="relative flex-1 pr-[71px] pb-6 pl-[70px]">
            <div className="relative">
                <Header />
                <Ribbon />
                <FormulaBar />
                <Sheet />
                <SheetTabs />
                <StatusBar />
                <Taskbar active="Excel" small />
                <Ink />
                <DrawToolbar />
                <div className="pointer-events-none absolute right-10 bottom-12 font-['Open_Sans',sans-serif] text-[#b9b9b9]">
                    <p className="text-[12px] leading-4">Activate Windows</p>
                    <p className="text-[9px] leading-3">Go to Settings to activate Windows.</p>
                </div>
            </div>
            <div className="pointer-events-none absolute right-10 bottom-[26px] font-['Open_Sans',sans-serif] text-[#8a8a8a]/90">
                <p className="text-[14px] leading-5">Activate Windows</p>
                <p className="text-[11px] leading-3">Go to Settings to activate Windows.</p>
            </div>
        </main>
        <Taskbar active="Photos" />
    </div>
);

export default App;
